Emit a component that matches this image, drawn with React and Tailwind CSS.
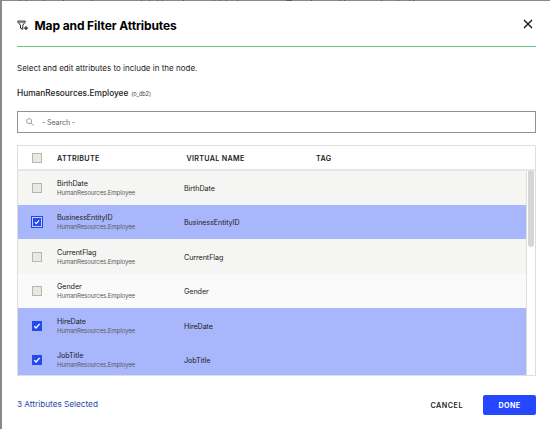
import React from "react";

const rows = [
  { name: "BirthDate", checked: false, bg: "bg-[#f5f5f3]", h: "h-[34px]" },
  { name: "BusinessEntityID", checked: true, focused: true, bg: "bg-[#a8b6fc]", h: "h-[34px]" },
  { name: "CurrentFlag", checked: false, bg: "bg-[#f5f5f3]", h: "h-[35px]" },
  { name: "Gender", checked: false, bg: "bg-[#fafafa]", h: "h-[34px]" },
  { name: "HireDate", checked: true, bg: "bg-[#a8b6fc]", h: "h-[34px] pt-px" },
  { name: "JobTitle", checked: true, bg: "bg-[#a8b6fc]", h: "h-[35px] pt-px" },
];

function Checkbox({ checked, focused }) {
  if (!checked) {
    return <span className="block size-[10px] border border-[#b5b6ae] bg-[#e8e9e2]" />;
  }
  return (
    <span
      className={
        focused
          ? "flex size-[12px] items-center justify-center border border-[#2547dc] bg-[#c4cdfc] p-px"
          : "flex size-[10px] items-center justify-center"
      }
    >
      <svg viewBox="0 0 10 10" className="size-full bg-[#2449f2]">
        <path d="M2.3 5.2 4.1 7 7.6 2.9" fill="none" stroke="white" strokeWidth="1.4" />
      </svg>
    </span>
  );
}

function FilterIcon() {
  return (
    <svg viewBox="0 0 11 11" className="h-[11px] w-[11px]" fill="none" stroke="#222" strokeWidth="1">
      <path d="M.8 1.1H8.2V2.2L5.8 5.2V9.3L3.5 8.2V5.2L.8 2.2Z" />
      <path d="M2 2.6H7" strokeWidth=".6" />
      <path d="M9 6.2V10M7.1 8.1H10.9" strokeWidth="1.2" />
    </svg>
  );
}

export default function App() {
  return (
    <div className="h-[429px] w-[550px] overflow-hidden bg-[#89898b] pl-[2px] font-['Inter','Liberation_Sans',sans-serif] text-[#222]">
      <svg viewBox="0 0 548 1" className="block h-px w-[548px]" stroke="#58585c">
        <path d="M18 .5h1m5 0h1m17 0h1m18 0h1m27 0h1m49 0h1m7 0h1m7 0h1m4 0h1m20 0h1m30 0h1m5 0h1m5 0h1m10 0h1m48 0h6m19 0h1m27 0h1m4 0h1m36 0h1m16 0h1m10 0h1m3 0h1" />
      </svg>
      <div className="flex h-[428px] flex-col bg-white pl-[15px] pr-[14px]">
        <header className="flex h-[46px] shrink-0 items-center border-b border-[#70bd82]">
          <div className="mt-[3px] flex h-[20px] w-[17.5px] items-center">
            <FilterIcon />
          </div>
          <h1 className="mt-[4px] whitespace-nowrap text-[12px] font-bold leading-[20px] tracking-[-0.1px] text-black">
            Map and Filter Attributes
          </h1>
          <button className="ml-auto mr-[3px]" aria-label="Close">
            <svg viewBox="0 0 10 10" className="size-[10px]" fill="none" stroke="#111" strokeWidth="1.3">
              <path d="M1 1 9 9M9 1 1 9" />
            </svg>
          </button>
        </header>

        <p className="mt-[15px] h-[12px] whitespace-nowrap text-[8px] leading-[12px]">
          Select and edit attributes to include in the node.
        </p>
        <div className="mt-[13px] flex h-[12px] items-baseline gap-[3px] whitespace-nowrap leading-[12px]">
          <span className="text-[8.3px] font-medium">HumanResources.Employee</span>
          <span className="text-[5.7px] tracking-[-0.15px] text-[#444]">(o_db2)</span>
        </div>

        <div className="mt-[12px] flex h-[22px] shrink-0 items-center border border-[#929292] pl-[8px]">
          <svg viewBox="0 0 8 8" className="size-[8px]" fill="none" stroke="#777" strokeWidth=".7">
            <circle cx="3.1" cy="3.1" r="2.5" />
            <path d="M5 5 7.5 7.5" />
          </svg>
          <span className="ml-[8px] whitespace-nowrap pt-[2px] text-[7.2px] tracking-[-0.15px] text-[#666]">
            - Search -
          </span>
        </div>

        <section className="mt-[12px] flex h-[231px] w-[519px] shrink-0 flex-col border border-[#dedede]">
          <div className="flex h-[25px] shrink-0 items-center border-b-2 border-[#e6e6e6] pt-px text-[7.2px] font-semibold tracking-[0.3px]">
            <div className="w-[39px] pl-[14px]">
              <Checkbox />
            </div>
            <div className="w-[129.5px] whitespace-nowrap pt-[2px]">ATTRIBUTE</div>
            <div className="w-[129.5px] whitespace-nowrap pt-[2px]">VIRTUAL NAME</div>
            <div className="pt-[2px]">TAG</div>
          </div>
          <div className="flex min-h-0 flex-1">
            <div className="w-[509px] overflow-hidden border-r border-[#dedede]">
              {rows.map((row) => (
                <div key={row.name} className={`flex items-center ${row.h} ${row.bg}`}>
                  <div className="flex w-[38px] justify-center">
                    <Checkbox checked={row.checked} focused={row.focused} />
                  </div>
                  <div className="ml-px w-[127px] whitespace-nowrap">
                    <div className="text-[7.2px] leading-[9px] tracking-[-0.08px]">{row.name}</div>
                    <div className="text-[6.2px] leading-[9px] tracking-[-0.17px] text-[#5c5c60]">
                      HumanResources.Employee
                    </div>
                  </div>
                  <div className="whitespace-nowrap pt-[2px] text-[7.2px] leading-[10px] tracking-[-0.08px]">
                    {row.name}
                  </div>
                </div>
              ))}
            </div>
            <div className="flex-1 pl-[1px]">
              <div className="h-[76px] w-[6px] rounded-b-full bg-[#d6d6d6]" />
            </div>
          </div>
        </section>

        <footer className="mt-[19px] flex h-[20px] items-center whitespace-nowrap">
          <span className="pb-[2px] text-[8.2px] text-[#2546a6]">3 Attributes Selected</span>
          <button className="ml-auto pt-[2px] text-[7.2px] font-semibold tracking-[0.5px]">CANCEL</button>
          <button className="ml-[20px] h-[20px] w-[53px] rounded-[2px] bg-[#2447ff] pt-[2px] text-[7.2px] font-bold tracking-[0.3px] text-white">
            DONE
          </button>
        </footer>
      </div>
    </div>
  );
}
